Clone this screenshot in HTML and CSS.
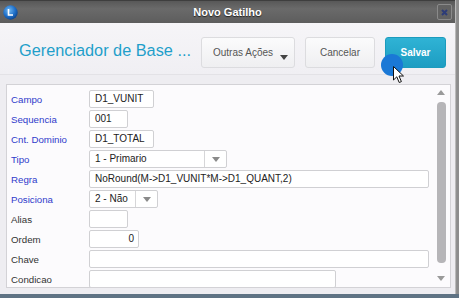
FILE: index.html
```html
<!DOCTYPE html>
<html lang="pt-BR">
<head>
    <meta charset="UTF-8">
    <title>Novo Gatilho</title>
    <link rel="stylesheet" href="styles.css">
</head>
<body>
    <div class="screen">
        <div class="window">
            <div class="titlebar">
                <svg class="logo" width="15" height="15" viewBox="0 0 15 15">
                    <defs>
                        <radialGradient id="ball" cx="0.4" cy="0.35" r="0.7">
                            <stop offset="0" stop-color="#6fb8f2"/>
                            <stop offset="0.6" stop-color="#1f6fc8"/>
                            <stop offset="1" stop-color="#0b3f86"/>
                        </radialGradient>
                    </defs>
                    <circle cx="7.5" cy="7.5" r="7.2" fill="url(#ball)"/>
                    <path d="M5.5 4 L5.5 10 L10 10" fill="none" stroke="#fff" stroke-width="1.6"/>
                </svg>
                <span class="title">Novo Gatilho</span>
                <span class="close">
                    <svg width="7" height="7" viewBox="0 0 7 7"><path d="M1 1 L6 6 M6 1 L1 6" stroke="#2d3c78" stroke-width="2"/></svg>
                </span>
            </div>
            <div class="header">
                <h1>Gerenciador de Base ...</h1>
                <div class="actions">
                    <button class="btn more">Outras Ações<span class="caret"></span></button>
                    <button class="btn cancel">Cancelar</button>
                    <button class="btn primary">Salvar</button>
                </div>
            </div>
            <div class="content">
                <div class="panel">
                    <div class="form">
                        <div class="row"><label class="req">Campo</label><div class="field w65">D1_VUNIT</div></div>
                        <div class="row"><label class="req">Sequencia</label><div class="field w39">001</div></div>
                        <div class="row"><label class="req">Cnt. Dominio</label><div class="field w65">D1_TOTAL</div></div>
                        <div class="row"><label class="req">Tipo</label><div class="field select w138"><span class="value">1 - Primario</span><span class="arrow"></span></div></div>
                        <div class="row"><label class="req">Regra</label><div class="field w340">NoRound(M-&gt;D1_VUNIT*M-&gt;D1_QUANT,2)</div></div>
                        <div class="row"><label class="req">Posiciona</label><div class="field select w69"><span class="value">2 - Não</span><span class="arrow"></span></div></div>
                        <div class="row"><label>Alias</label><div class="field w39"></div></div>
                        <div class="row"><label>Ordem</label><div class="field w50 num">0</div></div>
                        <div class="row"><label>Chave</label><div class="field w340"></div></div>
                        <div class="row"><label>Condicao</label><div class="field w247"></div></div>
                    </div>
                    <div class="scrollbar">
                        <span class="up"></span>
                        <span class="thumb"></span>
                        <span class="down"></span>
                    </div>
                </div>
            </div>
        </div>
        <div class="edge"></div>
    </div>
    <div class="click">
        <span class="dot"></span>
        <svg class="cursor" width="12" height="18" viewBox="0 0 12 18">
            <path d="M0.5 0.5 L0.5 14 L3.8 10.8 L6.2 16.5 L8.4 15.6 L6 10 L10.5 10 Z" fill="#fff" stroke="#111" stroke-width="1"/>
        </svg>
    </div>
</body>
</html>
```

FILE: styles.css
```css
body {
    margin: 0;
    width: 459px;
    height: 298px;
    overflow: hidden;
    background: #5f7384;
    font-family: "Liberation Sans", Arial, sans-serif;
    position: relative;
}
.screen {
    display: flex;
    height: 294px;
}
.window {
    width: 455px;
    display: flex;
    flex-direction: column;
}
.edge {
    width: 4px;
    background: linear-gradient(to right, #cfcfcf, #8d8d8d 40%);
}
.titlebar {
    height: 23px;
    box-sizing: border-box;
    border-top: 1px solid #3e3e3e;
    background: linear-gradient(#585858, #6a6a6a 35%, #5d5d5d);
    display: flex;
    align-items: center;
    position: relative;
}
.logo {
    margin-left: 3px;
}
.title {
    position: absolute;
    left: 0;
    right: 0;
    text-align: center;
    color: #fff;
    font-weight: bold;
    font-size: 11px;
    text-shadow: 0 1px 1px #222;
}
.close {
    margin-left: auto;
    margin-right: 3px;
    width: 15px;
    height: 16px;
    box-sizing: border-box;
    border: 1px solid #8a8a8a;
    border-radius: 2px;
    background: #626262;
    display: flex;
    align-items: center;
    justify-content: center;
    position: relative;
}
.header {
    height: 52px;
    box-sizing: border-box;
    padding: 7px 9px 0 19px;
    border-bottom: 1px solid #e3e2e6;
    background: linear-gradient(#f6f5f8, #f0eff3);
    display: flex;
    align-items: center;
}
.header h1 {
    margin: 0 0 3px 0;
    font-size: 16.3px;
    font-weight: normal;
    color: #1f9fca;
}
.actions {
    margin-left: auto;
    display: flex;
    gap: 10px;
}
.btn {
    height: 31px;
    box-sizing: border-box;
    border: 1px solid #dcdcdf;
    border-radius: 3px;
    background: linear-gradient(#fbfbfc, #efeff1);
    font-family: inherit;
    font-size: 10px;
    color: #555;
    padding: 0;
}
.btn.more {
    width: 94px;
    text-align: left;
    padding-left: 11px;
    position: relative;
}
.caret {
    position: absolute;
    right: 6px;
    bottom: 7px;
    border-left: 4px solid transparent;
    border-right: 4px solid transparent;
    border-top: 5px solid #444;
}
.btn.cancel {
    width: 70px;
}
.btn.primary {
    width: 61px;
    border-color: #1c9bbd;
    background: linear-gradient(#2fb3d5, #1d9dc2);
    color: #fff;
    font-weight: bold;
}
.content {
    flex: 1;
    display: flex;
    padding: 9px 4px 6px 6px;
    background: #eeedf1;
    min-height: 0;
}
.panel {
    flex: 1;
    display: flex;
    border: 1px solid #d3d2d6;
    background: #fcfbfd;
    overflow: hidden;
}
.form {
    flex: 1;
    padding: 5px 0 0 4px;
    display: flex;
    flex-direction: column;
    gap: 2px;
}
.row {
    display: flex;
    align-items: center;
    height: 18px;
    flex-shrink: 0;
}
.row label {
    width: 78px;
    font-size: 9.7px;
    color: #333;
}
.row label.req {
    color: #2f3acb;
}
.field {
    height: 18px;
    box-sizing: border-box;
    border: 1px solid #d0d0d3;
    border-radius: 2px;
    background: #fff;
    font-size: 10px;
    color: #222;
    padding: 0 5px;
    line-height: 16px;
    white-space: nowrap;
    overflow: hidden;
}
.field.num {
    text-align: right;
    padding-right: 4px;
}
.field.select {
    display: flex;
    padding-right: 0;
}
.select .value {
    flex: 1;
}
.select .arrow {
    width: 21px;
    border-left: 1px solid #d6d6d8;
    display: flex;
    align-items: center;
    justify-content: center;
}
.select .arrow::after {
    content: "";
    border-left: 4px solid transparent;
    border-right: 4px solid transparent;
    border-top: 5px solid #8a8a8a;
}
.w39 { width: 39px; }
.w50 { width: 50px; }
.w65 { width: 65px; }
.w69 { width: 69px; }
.w138 { width: 138px; }
.w247 { width: 247px; }
.w340 { width: 340px; }
.scrollbar {
    width: 14px;
    margin-right: 2px;
    padding-top: 5px;
    display: flex;
    flex-direction: column;
    align-items: center;
}
.scrollbar .up,
.scrollbar .down {
    width: 0;
    height: 0;
    border-left: 4px solid transparent;
    border-right: 4px solid transparent;
}
.scrollbar .up {
    border-bottom: 5px solid #9a9a9a;
}
.scrollbar .down {
    border-top: 5px solid #9a9a9a;
    margin-top: 13px;
}
.scrollbar .thumb {
    width: 9px;
    height: 161px;
    margin-top: 7px;
    border-radius: 4px;
    background: #b6b5b8;
}
.click {
    position: absolute;
    left: 381px;
    top: 54px;
    width: 30px;
    height: 30px;
}
.dot {
    position: absolute;
    left: 0;
    top: 0;
    width: 22px;
    height: 22px;
    border-radius: 50%;
    background: #1a78d6;
}
.cursor {
    position: absolute;
    left: 12px;
    top: 12px;
}
```
